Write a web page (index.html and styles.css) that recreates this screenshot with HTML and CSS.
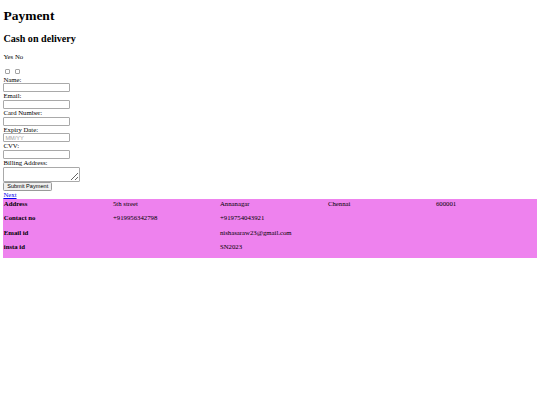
FILE: index.html
```html
<!DOCTYPE html>
<html lang="en">
<head>
<meta charset="utf-8">
<title>Payment</title>
<link rel="stylesheet" href="styles.css">
</head>
<body class="page">
<h1 class="title">Payment</h1>
<h2 class="subtitle">Cash on delivery</h2>
<p class="choice-text">Yes No</p>
<div class="choices"><input type="checkbox" class="check"><input type="checkbox" class="check"></div>
<form class="pay-form">
<label class="field-label">Name:</label>
<input type="text" class="field">
<label class="field-label">Email:</label>
<input type="email" class="field">
<label class="field-label">Card Number:</label>
<input type="text" class="field">
<label class="field-label">Expiry Date:</label>
<input type="text" class="field" placeholder="MM/YY">
<label class="field-label">CVV:</label>
<input type="text" class="field">
<label class="field-label">Billing Address:</label>
<textarea class="area"></textarea>
<button type="button" class="submit">Submit Payment</button>
</form>
<a href="#" class="next">Next</a>
<table class="info">
<colgroup>
<col class="c1"><col class="c2"><col class="c3"><col class="c4"><col class="c5">
</colgroup>
<tr><th class="key">Address</th><td class="val">5th street</td><td class="val">Annanagar</td><td class="val">Chennai</td><td class="val">600001</td></tr>
<tr><th class="key">Contact no</th><td class="val">+919956342798</td><td class="val">+919754043921</td></tr>
<tr><th class="key">Email id</th><td class="val"></td><td class="val">nishasaraw23@gmail.com</td></tr>
<tr><th class="key">insta id</th><td class="val"></td><td class="val">SN2023</td></tr>
</table>
</body>
</html>
```

FILE: styles.css
```css
html {
  background: #fff;
}
.page {
  margin: 0;
  padding: 0 3.4px;
  font-family: "Liberation Serif", "Times New Roman", serif;
  font-size: 6.75px;
  line-height: 7.76px;
  color: #000;
}
.title {
  font-size: 13.5px;
  line-height: 15.5px;
  margin: 8.4px 0 0;
}
.subtitle {
  font-size: 10.125px;
  line-height: 11.6px;
  margin: 9.2px 0 0;
}
.choice-text {
  margin: 8.3px 0 0;
}
.choices {
  display: flex;
  gap: 4.2px;
  margin: 8.2px 0 1.3px;
  padding-left: 1.6px;
}
.check {
  appearance: none;
  -webkit-appearance: none;
  box-sizing: border-box;
  width: 5.5px;
  height: 5.5px;
  margin: 0;
  border: 1px solid #a3a3a3;
  border-radius: 1px;
  background: #fff;
}
.pay-form {
  display: flex;
  flex-direction: column;
  align-items: flex-start;
  margin: 0;
}
.field-label {
  display: block;
  line-height: 7.76px;
}
.field,
.area,
.submit {
  font-family: "Liberation Sans", Arial, sans-serif;
  font-size: 5.6px;
  box-sizing: border-box;
  margin: 0;
}
.field {
  width: 66.4px;
  height: 8.86px;
  padding: 0 1px;
  border: 1px solid #a9a9a9;
  border-radius: 1px;
}
.field::placeholder {
  color: #a0a0a0;
}
.area {
  width: 76.7px;
  height: 15.3px;
  margin-bottom: 0.4px;
  padding: 0 1px;
  border: 1px solid #a9a9a9;
  border-radius: 1px;
}
.submit {
  height: 8.4px;
  width: 48.6px;
  padding: 0 2px;
  margin-bottom: 0.8px;
  border: 1px solid #9a9a9a;
  border-radius: 1.3px;
  background: #efefef;
  color: #000;
  line-height: 6px;
}
.next {
  display: block;
  width: max-content;
  color: #0000ee;
  text-decoration: underline;
}
.info {
  width: 100%;
  background: #ee82ee;
  border-collapse: collapse;
  table-layout: fixed;
}
.c1 { width: 109.2px; }
.c2 { width: 107px; }
.c3 { width: 108px; }
.c4 { width: 108px; }
.key,
.val {
  text-align: left;
  vertical-align: top;
  padding: 0.42px 0.42px 6.42px;
  line-height: 7.76px;
  font-size: 6.75px;
}
.key {
  font-weight: bold;
}
```
